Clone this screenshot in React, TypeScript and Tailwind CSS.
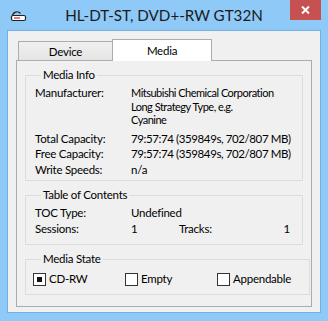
import React from "react";

function DriveIcon() {
  return (
    <svg width="17" height="12" viewBox="0 0 17 12" className="block">
      <path d="M2.5 6.5 A4.5 4.5 0 0 1 10.5 3.5" fill="none" stroke="#222" strokeWidth="1.2" />
      <rect x="1.5" y="5.5" width="14" height="5" rx="1.5" fill="#fff" stroke="#222" strokeWidth="1.2" />
      <line x1="4" y1="8" x2="10" y2="8" stroke="#d22" strokeWidth="1.2" />
    </svg>
  );
}

function CheckBox({ label, checked }: { label: string; checked?: boolean }) {
  return (
    <div className="w-[92px] flex items-center gap-[3px]">
      <div className="w-[13px] h-[13px] border border-[#333] bg-white flex items-center justify-center">
        {checked && <div className="w-[5px] h-[5px] bg-[#111]" />}
      </div>
      <span className="leading-[16px]">{label}</span>
    </div>
  );
}

export default function App() {
  return (
    <div className="w-[328px] h-[321px] bg-[#8ec9f7] flex flex-col px-[7px] pb-[8px] font-['Lato',sans-serif] text-[11.5px] tracking-[-0.25px] text-black whitespace-nowrap">
      {/* Barra de título */}
      <div className="h-[30px] grid grid-cols-[1fr_auto_1fr]">
        <div className="pl-[3px] pt-[10px]">
          <DriveIcon />
        </div>
        <div className="pt-[5px] text-[15.2px] tracking-normal leading-[20px] text-[#1b1b1b]">HL-DT-ST, DVD+-RW GT32N</div>
        <div className="flex justify-end">
          <button className="w-[31px] h-[20px] bg-[#c75050] flex items-center justify-center">
            <svg width="9" height="8" viewBox="0 0 9 8">
              <path d="M1 0.5 L8 7.5 M8 0.5 L1 7.5" stroke="#fff" strokeWidth="2" />
            </svg>
          </button>
        </div>
      </div>

      {/* Área cliente */}
      <div className="flex-1 border border-[#74b0e4] bg-[#f0f0f0] flex flex-col pt-[8px] px-[8px] pb-[5px]">
        {/* Abas */}
        <div className="h-[21px] flex items-end pl-[2px]">
          <div className="w-[95px] h-[19px] border border-b-0 border-[#acacac] bg-gradient-to-b from-[#f0f0f0] to-[#e5e5e5] flex items-center justify-center leading-[16px] pt-[2px]">
            Device
          </div>
          <div className="w-[100px] h-[22px] -ml-[1px] -mb-[1px] relative z-10 border border-b-0 border-[#acacac] bg-white flex items-center justify-center leading-[16px]">
            Media
          </div>
        </div>

        {/* Página da aba */}
        <div className="flex-1 border border-[#acacac] bg-[#f0f0f0] px-[8px] pt-[7px]">
          <fieldset className="h-[113px] border border-[#dcdcdc] px-[9px] pt-[4px]">
            <legend className="ml-[6px] px-[2px] leading-[14px]">Media Info</legend>
            <div className="grid grid-cols-[96px_1fr] leading-[14px]">
              <div>Manufacturer:</div>
              <div className="leading-[13.5px] text-[11px] tracking-[-0.5px]">
                Mitsubishi Chemical Corporation
                <br />
                Long Strategy Type, e.g.
                <br />
                Cyanine
              </div>
              <div className="mt-[5px]">Total Capacity:</div>
              <div className="mt-[5px] tracking-[-0.4px]">79:57:74 (359849s, 702/807 MB)</div>
              <div className="mt-[1px]">Free Capacity:</div>
              <div className="mt-[1px] tracking-[-0.4px]">79:57:74 (359849s, 702/807 MB)</div>
              <div className="mt-[2px]">Write Speeds:</div>
              <div className="mt-[2px]">n/a</div>
            </div>
          </fieldset>

          <fieldset className="h-[57px] mt-[7px] border border-[#dcdcdc] pl-[9px] pr-[12px] pt-[3px]">
            <legend className="ml-[6px] px-[2px] leading-[14px]">Table of Contents</legend>
            <div className="grid grid-cols-[96px_48px_auto_1fr] leading-[16px]">
              <div>TOC Type:</div>
              <div className="col-span-3">Undefined</div>
              <div>Sessions:</div>
              <div>1</div>
              <div>Tracks:</div>
              <div className="text-right">1</div>
            </div>
          </fieldset>

          <fieldset className="h-[43px] mt-[7px] border border-[#dcdcdc] pl-[7px] pt-[5px]">
            <legend className="ml-[8px] px-[2px] leading-[14px]">Media State</legend>
            <div className="flex">
              <CheckBox label="CD-RW" checked />
              <CheckBox label="Empty" />
              <CheckBox label="Appendable" />
            </div>
          </fieldset>
        </div>
      </div>
    </div>
  );
}
